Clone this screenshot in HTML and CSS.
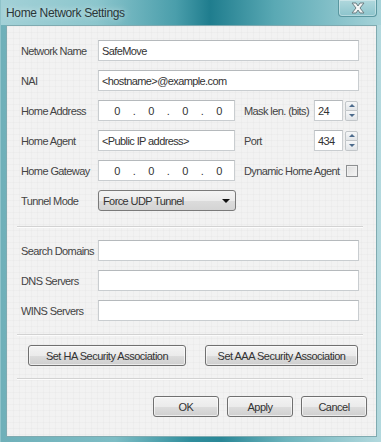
FILE: index.html
```html
<!DOCTYPE html>
<html lang="en">
<head>
    <meta charset="UTF-8">
    <title>Home Network Settings</title>
    <link rel="stylesheet" href="styles.css">
</head>
<body>
    <div class="window">
        <div class="titlebar">
            <span class="title">Home Network Settings</span>
            <div class="close">
                <svg width="14" height="12" viewBox="0 0 14 12">
                    <polygon points="1,1 5,1 7,4 9,1 13,1 9,6 13,11 9,11 7,8 5,11 1,11 5,6" fill="#f4f6f6" stroke="#6d7f83" stroke-width="1" stroke-linejoin="round"/>
                </svg>
            </div>
        </div>
        <div class="client">
            <div class="group">
                <div class="row">
                    <span class="lbl">Network Name</span>
                    <div class="field grow">SafeMove</div>
                </div>
                <div class="row">
                    <span class="lbl">NAI</span>
                    <div class="field grow">&lt;hostname&gt;@example.com</div>
                </div>
                <div class="row split">
                    <span class="lbl">Home Address</span>
                    <div class="field ip">
                        <span class="oct">0</span><span class="dot">.</span><span class="oct">0</span><span class="dot">.</span><span class="oct">0</span><span class="dot">.</span><span class="oct">0</span>
                    </div>
                    <span class="lbl2">Mask len. (bits)</span>
                    <div class="field spin-box">24</div>
                    <div class="spinner"><span class="up"></span><span class="down"></span></div>
                </div>
                <div class="row split">
                    <span class="lbl">Home Agent</span>
                    <div class="field">&lt;Public IP address&gt;</div>
                    <span class="lbl2">Port</span>
                    <div class="field spin-box">434</div>
                    <div class="spinner"><span class="up"></span><span class="down"></span></div>
                </div>
                <div class="row split">
                    <span class="lbl">Home Gateway</span>
                    <div class="field ip">
                        <span class="oct">0</span><span class="dot">.</span><span class="oct">0</span><span class="dot">.</span><span class="oct">0</span><span class="dot">.</span><span class="oct">0</span>
                    </div>
                    <span class="lbl2 long">Dynamic Home Agent</span>
                    <span class="checkbox"></span>
                </div>
                <div class="row">
                    <span class="lbl">Tunnel Mode</span>
                    <div class="select">
                        <span>Force UDP Tunnel</span>
                        <span class="arrow"></span>
                    </div>
                </div>
            </div>

            <div class="sep first"></div>

            <div class="group">
                <div class="row">
                    <span class="lbl">Search Domains</span>
                    <div class="field grow"></div>
                </div>
                <div class="row">
                    <span class="lbl">DNS Servers</span>
                    <div class="field grow"></div>
                </div>
                <div class="row">
                    <span class="lbl">WINS Servers</span>
                    <div class="field grow"></div>
                </div>
            </div>

            <div class="sep second"></div>

            <div class="sa-buttons">
                <button class="btn ha">Set HA Security Association</button>
                <button class="btn aaa">Set AAA Security Association</button>
            </div>

            <div class="sep third"></div>

            <div class="dialog-buttons">
                <button class="btn small">OK</button>
                <button class="btn small">Apply</button>
                <button class="btn small">Cancel</button>
            </div>
        </div>
    </div>
</body>
</html>
```

FILE: styles.css
```css
* {
    box-sizing: border-box;
}

body {
    margin: 0;
    width: 381px;
    height: 442px;
    overflow: hidden;
    font-family: "Liberation Sans", Arial, sans-serif;
    font-size: 11px;
    letter-spacing: -0.6px;
    color: #444;
}

.window {
    width: 381px;
    height: 442px;
    display: flex;
    flex-direction: column;
    background: linear-gradient(to right, #6fb0b9 0%, #7dbdc5 30%, #2f8d9c 50%, #2a8797 58%, #6db4bd 75%, #b3d9de 100%);
    padding: 0 4px 5px 5px;
    border-left: 1px solid #8fc3ca;
}

.titlebar {
    height: 25px;
    display: flex;
    align-items: flex-start;
    justify-content: space-between;
    margin-left: -5px;
    margin-right: -4px;
    padding-left: 5px;
    background: linear-gradient(to right, #a3d1d7 0%, #8cc6cd 25%, #4a9eab 46%, #1f7d8e 55%, #5aa9b4 72%, #a6d3d9 100%);
}

.title {
    margin-top: 6px;
    font-size: 12px;
    letter-spacing: -0.35px;
    color: #2a3638;
    text-shadow: 0 0 6px rgba(255, 255, 255, 0.7);
}

.close {
    width: 39px;
    height: 17px;
    margin-right: 4px;
    display: flex;
    align-items: center;
    justify-content: center;
    border: 1px solid #5a97a0;
    border-top: none;
    border-radius: 0 0 4px 4px;
    background: linear-gradient(to bottom, #b0d8dd, #8cc4cc);
    box-shadow: inset 0 0 0 1px rgba(255, 255, 255, 0.35);
}

.client {
    flex: 1;
    border: 1px solid #7faab0;
    background-color: #f2f2f2;
    background-image:
        repeating-linear-gradient(to right, rgba(0, 0, 0, 0.018) 0 1px, transparent 1px 6px),
        repeating-linear-gradient(to bottom, rgba(0, 0, 0, 0.018) 0 1px, transparent 1px 6px);
    padding: 14px 17px 0 14px;
}

.group {
    display: flex;
    flex-direction: column;
    gap: 9px;
}

.row {
    height: 21px;
    display: flex;
    align-items: center;
}

/* label | field | label | spin box | spinner */
.row.split {
    display: grid;
    grid-template-columns: 77px 137px 79px 29px 15px;
    align-items: center;
}

.lbl {
    width: 77px;
    flex-shrink: 0;
}

.field {
    height: 21px;
    background: #fff;
    border: 1px solid #c9cdd0;
    border-top-color: #b5b9bc;
    color: #333;
    padding: 0 3px;
    display: flex;
    align-items: center;
    white-space: nowrap;
    overflow: hidden;
}

.field.grow {
    flex: 1;
}

.field.ip {
    padding: 0 0 0 3px;
}

.oct {
    width: 30px;
    flex-shrink: 0;
    text-align: center;
}

.dot {
    width: 4px;
    flex-shrink: 0;
    text-align: center;
}

.lbl2 {
    padding-left: 9px;
    white-space: nowrap;
}

.lbl2.long {
    grid-column: 3 / 5;
}

.spinner {
    width: 13px;
    height: 20px;
    justify-self: end;
    display: flex;
    flex-direction: column;
}

.spinner span {
    flex: 1;
    border: 1px solid #c2c6c9;
    background: linear-gradient(to bottom, #f6f7f8, #e2e5e8);
    display: flex;
    align-items: center;
    justify-content: center;
}

.spinner .up {
    border-radius: 2px 2px 0 0;
}

.spinner .down {
    border-top: none;
    border-radius: 0 0 2px 2px;
}

.spinner .up::after,
.spinner .down::after {
    content: "";
    border-left: 3px solid transparent;
    border-right: 3px solid transparent;
}

.spinner .up::after {
    border-bottom: 3px solid #4d6b8c;
}

.spinner .down::after {
    border-top: 3px solid #4d6b8c;
}

.checkbox {
    width: 12px;
    height: 12px;
    justify-self: end;
    border: 1px solid #8e9092;
    background: linear-gradient(135deg, #dcdcdc, #f6f6f6);
    box-shadow: inset 0 0 0 1px #f0f0f0;
    margin-top: 1px;
}

.select {
    width: 138px;
    height: 21px;
    border: 1px solid #7a7a7a;
    border-radius: 3px;
    background: linear-gradient(to bottom, #f4f4f4 0%, #ebebeb 50%, #dcdcdc 51%, #d4d4d4 100%);
    display: flex;
    align-items: center;
    justify-content: space-between;
    padding: 0 5px 0 4px;
    color: #333;
}

.select .arrow {
    border-left: 4px solid transparent;
    border-right: 4px solid transparent;
    border-top: 4px solid #111;
}

.sep {
    margin-left: -4px;
    margin-right: -4px;
    border-top: 1px solid #d2d2d2;
    border-bottom: 1px solid #fcfcfc;
}

.sep.first {
    margin-top: 15px;
    margin-bottom: 12px;
}

.sep.second {
    margin-top: 13px;
    margin-bottom: 9px;
}

.sep.third {
    margin-top: 12px;
    margin-bottom: 16px;
}

.btn {
    height: 21px;
    font-family: "Liberation Sans", Arial, sans-serif;
    font-size: 11px;
    letter-spacing: -0.5px;
    color: #333;
    border: 1px solid #707070;
    border-radius: 3px;
    background: linear-gradient(to bottom, #f3f3f3 0%, #ebebeb 50%, #dddddd 51%, #cfcfcf 100%);
    box-shadow: inset 0 0 0 1px rgba(255, 255, 255, 0.6);
    padding: 0;
}

.sa-buttons {
    display: flex;
    gap: 19px;
    padding-left: 7px;
}

.btn.ha {
    width: 158px;
}

.btn.aaa {
    width: 153px;
}

.dialog-buttons {
    display: flex;
    justify-content: flex-end;
    gap: 8px;
    margin-right: -8px;
}

.btn.small {
    width: 66px;
}
```
